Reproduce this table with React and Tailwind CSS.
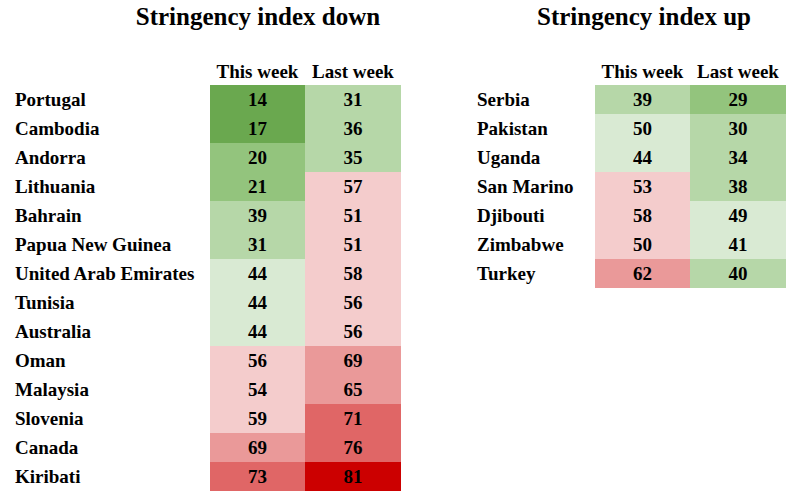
const down = [
  ["Portugal", 14, "bg-[#6aa84f]", 31, "bg-[#b6d7a8]"],
  ["Cambodia", 17, "bg-[#6aa84f]", 36, "bg-[#b6d7a8]"],
  ["Andorra", 20, "bg-[#93c47d]", 35, "bg-[#b6d7a8]"],
  ["Lithuania", 21, "bg-[#93c47d]", 57, "bg-[#f4cccc]"],
  ["Bahrain", 39, "bg-[#b6d7a8]", 51, "bg-[#f4cccc]"],
  ["Papua New Guinea", 31, "bg-[#b6d7a8]", 51, "bg-[#f4cccc]"],
  ["United Arab Emirates", 44, "bg-[#d9ead3]", 58, "bg-[#f4cccc]"],
  ["Tunisia", 44, "bg-[#d9ead3]", 56, "bg-[#f4cccc]"],
  ["Australia", 44, "bg-[#d9ead3]", 56, "bg-[#f4cccc]"],
  ["Oman", 56, "bg-[#f4cccc]", 69, "bg-[#ea9999]"],
  ["Malaysia", 54, "bg-[#f4cccc]", 65, "bg-[#ea9999]"],
  ["Slovenia", 59, "bg-[#f4cccc]", 71, "bg-[#e06666]"],
  ["Canada", 69, "bg-[#ea9999]", 76, "bg-[#e06666]"],
  ["Kiribati", 73, "bg-[#e06666]", 81, "bg-[#cc0000]"],
];

const up = [
  ["Serbia", 39, "bg-[#b6d7a8]", 29, "bg-[#93c47d]"],
  ["Pakistan", 50, "bg-[#d9ead3]", 30, "bg-[#b6d7a8]"],
  ["Uganda", 44, "bg-[#d9ead3]", 34, "bg-[#b6d7a8]"],
  ["San Marino", 53, "bg-[#f4cccc]", 38, "bg-[#b6d7a8]"],
  ["Djibouti", 58, "bg-[#f4cccc]", 49, "bg-[#d9ead3]"],
  ["Zimbabwe", 50, "bg-[#f4cccc]", 41, "bg-[#d9ead3]"],
  ["Turkey", 62, "bg-[#ea9999]", 40, "bg-[#b6d7a8]"],
];

const StringencyTable = ({ title, rows, nameWidth, titleOffset }) => (
  <div className="flex flex-col">
    <div className="h-[58px]">
      <h2
        className={`${titleOffset} w-[260px] text-center text-[25px] leading-[34px] font-bold whitespace-nowrap`}
      >
        {title}
      </h2>
    </div>
    <div className="flex h-[27px] items-center">
      <div className={nameWidth} />
      <div className="w-[95px] text-center whitespace-nowrap">This week</div>
      <div className="w-[96px] text-center whitespace-nowrap">Last week</div>
    </div>
    {rows.map(([name, now, nowBg, last, lastBg]) => (
      <div key={name} className="flex h-[29px] items-stretch">
        <div className={`${nameWidth} flex items-center whitespace-nowrap`}>{name}</div>
        <div className={`w-[95px] flex items-center justify-center ${nowBg}`}>{now}</div>
        <div className={`w-[96px] flex items-center justify-center ${lastBg}`}>{last}</div>
      </div>
    ))}
  </div>
);

export default function App() {
  return (
    <div className="w-[792px] h-[500px] bg-white text-black font-bold text-[19px] leading-none font-['Liberation_Serif',serif] flex pl-[15px] gap-[76px]">
      <StringencyTable
        title="Stringency index down"
        rows={down}
        nameWidth="w-[195px]"
        titleOffset="ml-[113px]"
      />
      <StringencyTable
        title="Stringency index up"
        rows={up}
        nameWidth="w-[118px]"
        titleOffset="ml-[37px]"
      />
    </div>
  );
}
